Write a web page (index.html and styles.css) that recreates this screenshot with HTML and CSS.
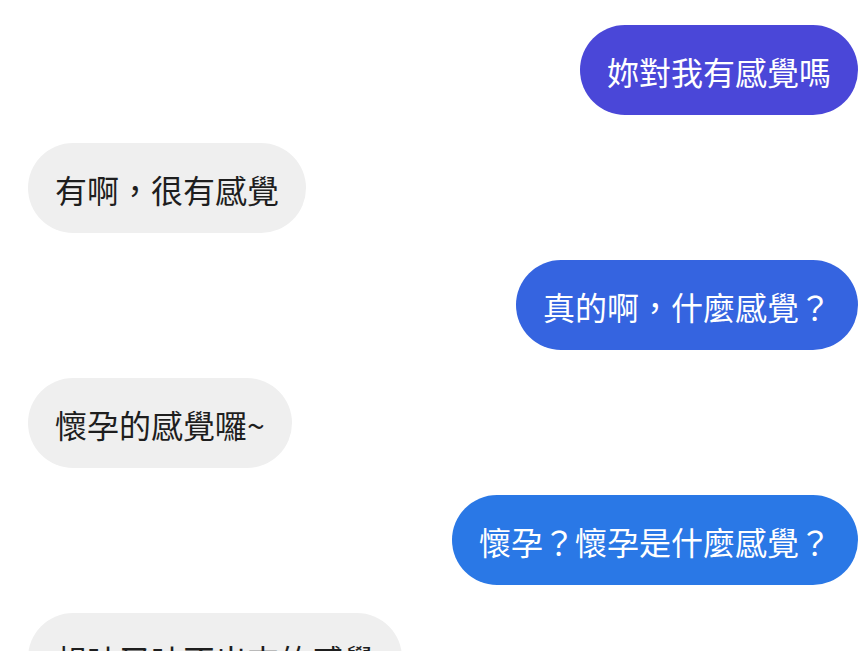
FILE: index.html
```html
<!DOCTYPE html>
<html lang="zh-Hant">
<head>
    <meta charset="UTF-8">
    <meta name="viewport" content="width=device-width, initial-scale=1.0">
    <title>聊天</title>
    <link rel="stylesheet" href="styles.css">
</head>
<body>

<div class="chat">
    <div class="msg me me-1">妳對我有感覺嗎</div>
    <div class="msg them">有啊，很有感覺</div>
    <div class="msg me me-2">真的啊，什麼感覺？</div>
    <div class="msg them">懷孕的感覺囉~</div>
    <div class="msg me me-3">懷孕？懷孕是什麼感覺？</div>
    <div class="msg them">想吐又吐不出來的感覺</div>
</div>

</body>
</html>
```

FILE: styles.css
```css
/* chat page */
body {
    margin: 0;
    background: #fff;
    font-family: "Noto Sans CJK TC", "Noto Sans", sans-serif;
    overflow: hidden;
}
.chat {
    display: flex;
    flex-direction: column;
    gap: 27.5px;
    padding: 25px 10px 0 28px;
}
.msg {
    height: 90px;
    line-height: 92px;
    padding: 0 27px;
    border-radius: 45px;
    font-size: 32px;
    white-space: nowrap;
}
.them {
    align-self: flex-start;
    background-color: #efefef;
    color: #1e1e1e;
}
.me {
    align-self: flex-end;
    color: #fff;
}
/* messenger style gradient, darker at the top */
.me-1 {
    background-color: #4a47d8;
}
.me-2 {
    background-color: #3564e0;
}
.me-3 {
    background-color: #2a78e6;
}
```
